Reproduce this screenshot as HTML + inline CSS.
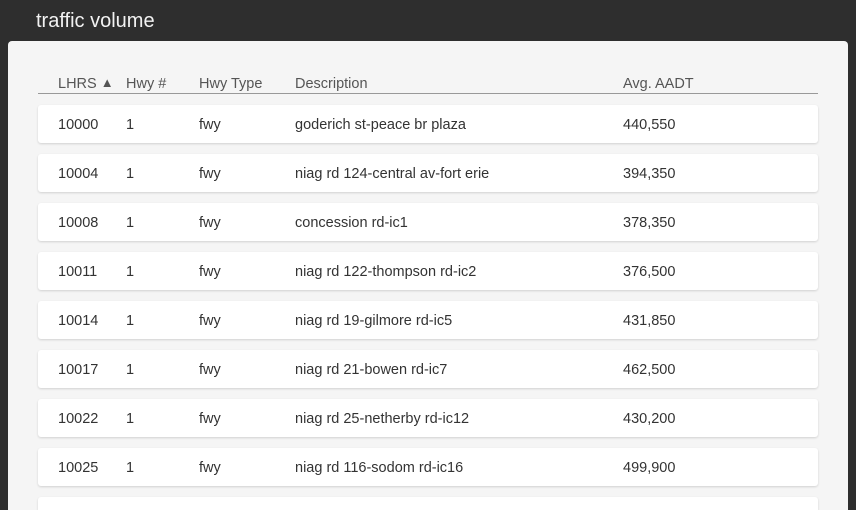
<!DOCTYPE html>
<html style="overflow:hidden;height:510px"><head><style>
body{margin:0;width:856px;height:510px;background:#2e2e2e;overflow:hidden;position:relative;font-family:"Liberation Sans",sans-serif;}
.t{position:absolute;left:36px;top:10px;color:#f2f2f2;font-size:20px;}
.p{position:absolute;left:8px;top:41px;width:840px;height:469px;background:#f5f5f5;border-radius:4px 4px 0 0;}
.h{position:absolute;top:76px;font-size:14.5px;color:#555;}
.line{position:absolute;left:38px;top:93px;width:780px;height:1px;background:#999;}
.r{position:absolute;left:38px;width:780px;height:38px;background:#fff;border-radius:3px;box-shadow:0 1px 2px rgba(0,0,0,.15);}
.r span{position:absolute;top:12px;font-size:14.5px;color:#333;}
</style></head><body>
<div class="t">traffic volume</div>
<div class="p"></div>
<div class="h" style="left:58px">LHRS <span style="font-size:13px;position:relative;top:-1px">&#9650;</span></div>
<div class="h" style="left:126px">Hwy #</div>
<div class="h" style="left:199px">Hwy Type</div>
<div class="h" style="left:295px">Description</div>
<div class="h" style="left:623px">Avg. AADT</div>
<div class="line"></div>
<div class="r" style="top:105px"><span style="left:20px">10000</span><span style="left:88px">1</span><span style="left:161px">fwy</span><span style="left:257px">goderich st-peace br plaza</span><span style="left:585px">440,550</span></div>
<div class="r" style="top:154px"><span style="left:20px">10004</span><span style="left:88px">1</span><span style="left:161px">fwy</span><span style="left:257px">niag rd 124-central av-fort erie</span><span style="left:585px">394,350</span></div>
<div class="r" style="top:203px"><span style="left:20px">10008</span><span style="left:88px">1</span><span style="left:161px">fwy</span><span style="left:257px">concession rd-ic1</span><span style="left:585px">378,350</span></div>
<div class="r" style="top:252px"><span style="left:20px">10011</span><span style="left:88px">1</span><span style="left:161px">fwy</span><span style="left:257px">niag rd 122-thompson rd-ic2</span><span style="left:585px">376,500</span></div>
<div class="r" style="top:301px"><span style="left:20px">10014</span><span style="left:88px">1</span><span style="left:161px">fwy</span><span style="left:257px">niag rd 19-gilmore rd-ic5</span><span style="left:585px">431,850</span></div>
<div class="r" style="top:350px"><span style="left:20px">10017</span><span style="left:88px">1</span><span style="left:161px">fwy</span><span style="left:257px">niag rd 21-bowen rd-ic7</span><span style="left:585px">462,500</span></div>
<div class="r" style="top:399px"><span style="left:20px">10022</span><span style="left:88px">1</span><span style="left:161px">fwy</span><span style="left:257px">niag rd 25-netherby rd-ic12</span><span style="left:585px">430,200</span></div>
<div class="r" style="top:448px"><span style="left:20px">10025</span><span style="left:88px">1</span><span style="left:161px">fwy</span><span style="left:257px">niag rd 116-sodom rd-ic16</span><span style="left:585px">499,900</span></div>
<div class="r" style="top:497px;height:13px;border-radius:3px 3px 0 0"></div>
</body></html>
